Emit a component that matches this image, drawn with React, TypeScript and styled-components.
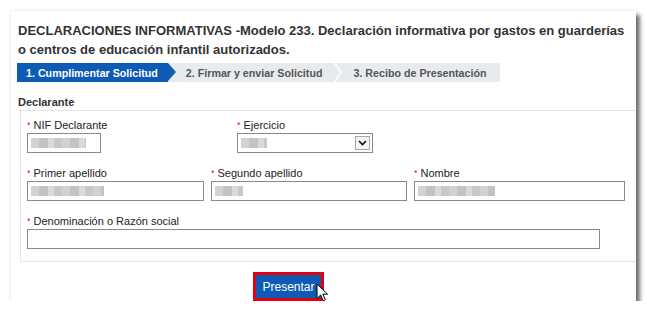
import styled, { createGlobalStyle } from "styled-components";

const GlobalStyle = createGlobalStyle`
  body {
    margin: 0;
    background: #ffffff;
    font-family: "Liberation Sans", Arial, sans-serif;
  }
`;

const BLUE = "#0d5bb5";

const Card = styled.div`
  position: relative;
  box-sizing: border-box;
  margin: 11px 0 0 11px;
  width: 625px;
  height: 290px;
  padding: 10px 0 0 7px;
  background: #fff;
  box-shadow: 4px 4px 4px rgba(0, 0, 0, 0.55), 0 0 3px rgba(0, 0, 0, 0.12);
`;

const Title = styled.h1`
  margin: 0 0 4px;
  font-size: 13px;
  line-height: 19px;
  font-weight: bold;
  color: #333;
`;

const Steps = styled.div`
  display: flex;
  align-items: center;
  width: 483px;
  height: 19px;
  margin-left: -1px;
  background: #e8ebee;
  font-size: 10.7px;
  font-weight: bold;
  white-space: nowrap;
`;

const ActiveStep = styled.div`
  position: relative;
  flex-shrink: 0;
  display: flex;
  align-items: center;
  height: 100%;
  padding: 0 10px 0 9px;
  background: ${BLUE};
  color: #fff;
  margin-right: 18px;

  &::after {
    content: "";
    position: absolute;
    left: 100%;
    top: 0;
    border-left: 8px solid ${BLUE};
    border-top: 9.5px solid transparent;
    border-bottom: 9.5px solid transparent;
  }
`;

const Step = styled.div`
  flex-shrink: 0;
  color: #555;
`;

const Separator = styled.svg`
  display: block;
  flex-shrink: 0;
  margin: 0 11px 0 12px;
`;

const Legend = styled.div`
  margin: 13px 0 1px;
  font-size: 11px;
  line-height: 14px;
  font-weight: bold;
  color: #333;
`;

const Section = styled.div`
  display: flex;
  flex-direction: column;
  gap: 13px;
  margin-left: 2px;
  padding: 7px 0 12px 6px;
  border: 1px solid #dfe6ee;
  border-right: none;
`;

const Row = styled.div<{ $cols?: string }>`
  display: ${(p) => (p.$cols ? "grid" : "flex")};
  grid-template-columns: ${(p) => p.$cols || "none"};
  gap: 7px;
`;

const Field = styled.div`
  display: flex;
  flex-direction: column;
`;

const Label = styled.label`
  font-size: 11px;
  line-height: 14px;
  color: #222;
  margin-bottom: 1px;
`;

const Req = styled.span`
  color: #d8232a;
  font-size: 9px;
  margin-right: 3px;
  vertical-align: 1px;
`;

const Input = styled.div<{ $w: number }>`
  box-sizing: border-box;
  display: flex;
  align-items: center;
  width: ${(p) => p.$w}px;
  height: 20px;
  padding-left: 2px;
  border: 1px solid #8a8a8a;
  background: #fff;
`;

const SelectBox = styled(Input)`
  justify-content: space-between;
  padding-right: 2px;
`;

const SelectArrow = styled.span`
  display: flex;
  align-items: center;
  justify-content: center;
  box-sizing: border-box;
  width: 15px;
  height: 14px;
  border: 1px solid #a9a9a9;
  background: #f4f4f4;
`;

const Blur = styled.span<{ $w: number }>`
  display: block;
  width: ${(p) => p.$w}px;
  height: 10px;
  margin-left: 1px;
  background: repeating-linear-gradient(
    90deg,
    #cdcdcd 0 8px,
    #bcbcbc 8px 17px,
    #d6d6d6 17px 23px,
    #c2c2c2 23px 31px
  );
  opacity: 0.9;
`;

const ButtonRow = styled.div`
  padding: 10px 0 0 235px;
`;

const ButtonWrap = styled.div`
  position: relative;
  width: 71px;
`;

const Button = styled.button`
  box-sizing: border-box;
  width: 71px;
  height: 29px;
  padding: 0;
  border: 3px solid #e3000f;
  background: ${BLUE};
  color: #fff;
  font-family: "Liberation Sans", Arial, sans-serif;
  font-size: 12px;
`;

const Cursor = styled.svg`
  position: absolute;
  left: 63px;
  top: 11px;
`;

function Required({ children }: { children: string }) {
  return (
    <Label>
      <Req>*</Req>
      {children}
    </Label>
  );
}

export default function App() {
  return (
    <>
      <GlobalStyle />
      <Card>
        <Title>
          DECLARACIONES INFORMATIVAS -Modelo 233. Declaración informativa por gastos en guarderías
          <br />o centros de educación infantil autorizados.
        </Title>

        <Steps>
          <ActiveStep>1. Cumplimentar Solicitud</ActiveStep>
          <Step>2. Firmar y enviar Solicitud</Step>
          <Separator width="8" height="19" viewBox="0 0 8 19">
            <polyline points="0.5,0 7,9.5 0.5,19" fill="none" stroke="#fff" strokeWidth="1.5" />
          </Separator>
          <Step>3. Recibo de Presentación</Step>
        </Steps>

        <Legend>Declarante</Legend>
        <Section>
          <Row $cols="203px auto">
            <Field>
              <Required>NIF Declarante</Required>
              <Input $w={74}>
                <Blur $w={55} />
              </Input>
            </Field>
            <Field>
              <Required>Ejercicio</Required>
              <SelectBox $w={136}>
                <Blur $w={26} />
                <SelectArrow>
                  <svg width="9" height="6" viewBox="0 0 9 6">
                    <polyline points="1,1 4.5,4.5 8,1" fill="none" stroke="#111" strokeWidth="1.6" />
                  </svg>
                </SelectArrow>
              </SelectBox>
            </Field>
          </Row>

          <Row>
            <Field>
              <Required>Primer apellido</Required>
              <Input $w={177}>
                <Blur $w={73} />
              </Input>
            </Field>
            <Field>
              <Required>Segundo apellido</Required>
              <Input $w={196}>
                <Blur $w={28} />
              </Input>
            </Field>
            <Field>
              <Required>Nombre</Required>
              <Input $w={211}>
                <Blur $w={77} />
              </Input>
            </Field>
          </Row>

          <Row>
            <Field>
              <Required>Denominación o Razón social</Required>
              <Input $w={573} />
            </Field>
          </Row>
        </Section>

        <ButtonRow>
          <ButtonWrap>
            <Button>Presentar</Button>
            <Cursor width="13" height="19" viewBox="0 0 13 19">
              <path
                d="M1,1 L1,15.5 L4.6,12 L7.2,17.8 L9.4,16.8 L6.9,11.2 L11.6,11.2 Z"
                fill="#fff"
                stroke="#000"
                strokeWidth="1"
                strokeLinejoin="round"
              />
            </Cursor>
          </ButtonWrap>
        </ButtonRow>
      </Card>
    </>
  );
}
